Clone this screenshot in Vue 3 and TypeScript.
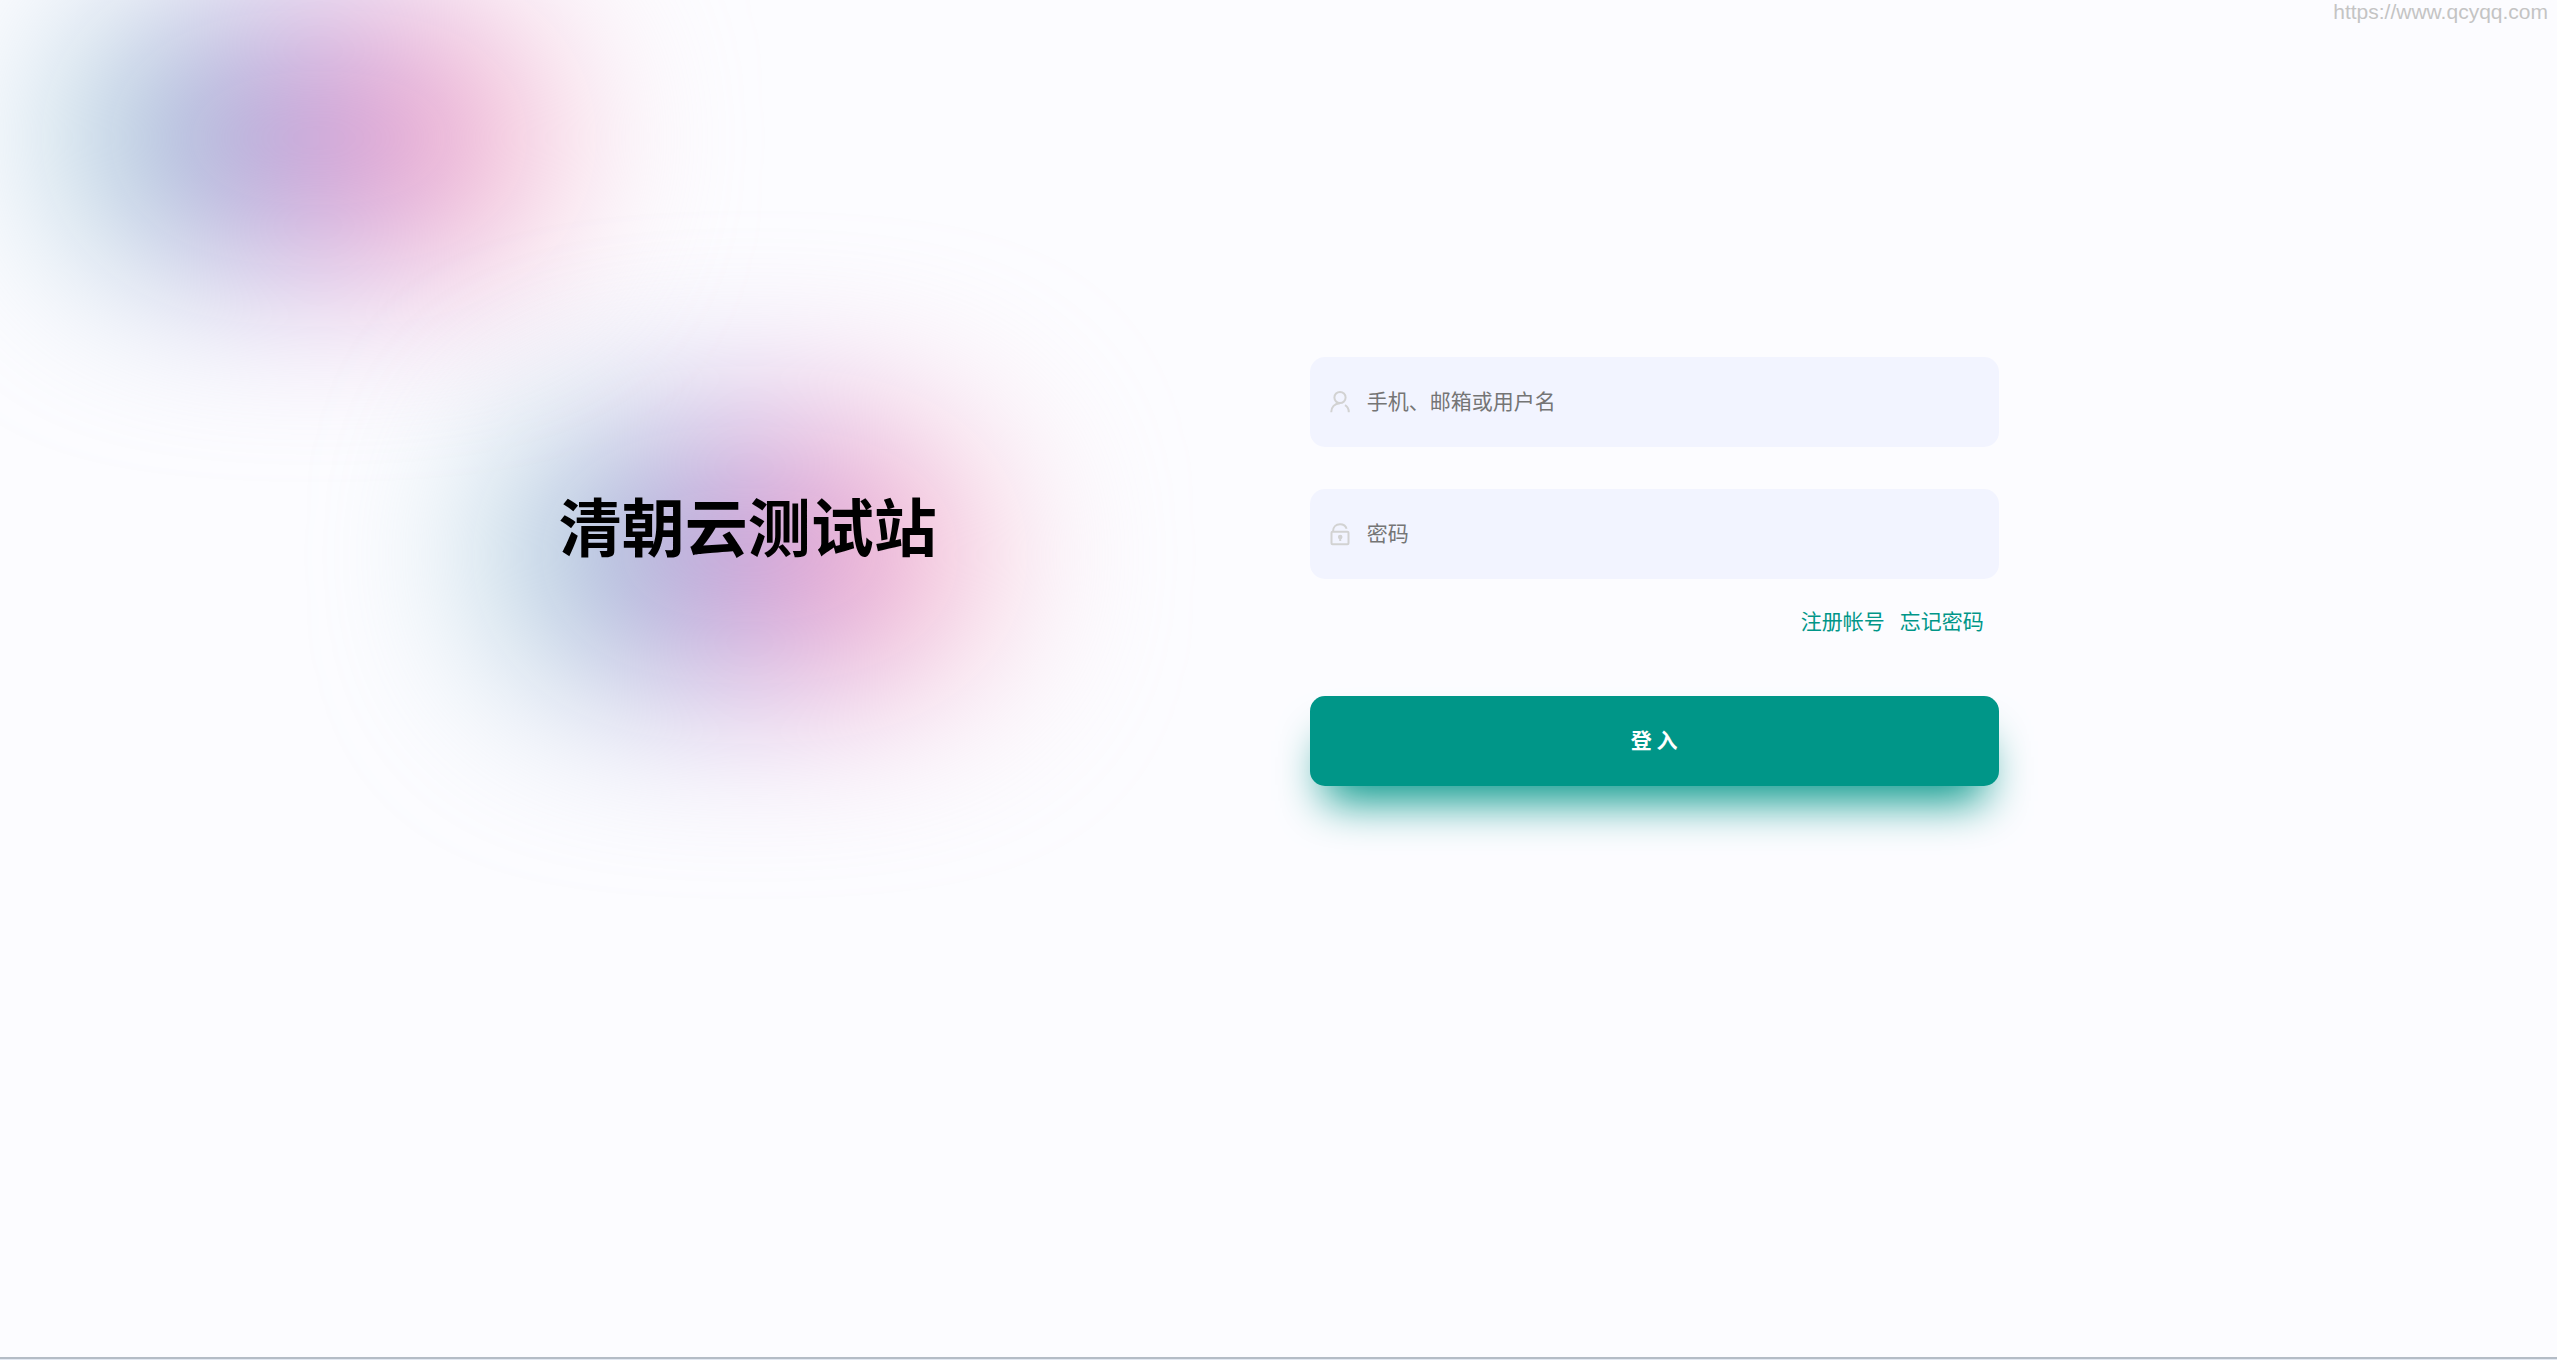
<script setup lang="ts">
import { ref } from 'vue'

const account = ref('')
const password = ref('')
</script>

<template>
  <div class="page">
    <div class="glow glow-corner" aria-hidden="true"></div>
    <header class="topbar">
      <a class="site-link" href="https://www.qcyqq.com">https://www.qcyqq.com</a>
    </header>
    <main class="login">
      <section class="brand">
        <div class="glow glow-brand" aria-hidden="true"></div>
        <h1 class="title">清朝云测试站</h1>
      </section>
      <form class="form" @submit.prevent>
        <label class="field" for="account">
          <svg class="icon" viewBox="0 0 24 24" aria-hidden="true">
            <circle cx="12" cy="7.5" r="5.6" />
            <path d="M3.2 22.2C3.2 17.2 6.6 13.4 12 13.2" />
            <path d="M17 15.2C19.4 16.6 20.8 19 20.8 22.2" />
          </svg>
          <input id="account" v-model="account" class="input" type="text" placeholder="手机、邮箱或用户名" aria-label="手机、邮箱或用户名" />
        </label>
        <label class="field" for="password">
          <svg class="icon" viewBox="0 0 24 24" aria-hidden="true">
            <rect x="3.5" y="9.8" width="17" height="12.4" rx="1" />
            <path d="M5 9.5C5 5 8 2.2 12 2.2C15.2 2.2 17.8 4 18.6 6.8" />
            <circle class="solid" cx="12.2" cy="15" r="1.3" />
            <path d="M12.2 15V19" />
          </svg>
          <input id="password" v-model="password" class="input" type="password" placeholder="密码" aria-label="密码" />
        </label>
        <nav class="links">
          <a class="link" href="#register">注册帐号</a>
          <a class="link" href="#forgot">忘记密码</a>
        </nav>
        <button class="submit" type="submit">登 入</button>
      </form>
    </main>
    <footer class="edge"></footer>
  </div>
</template>

<style>
body {
  background: #fcfcff;
}
</style>

<style scoped>
.page {
  position: relative;
  display: flex;
  flex-direction: column;
  min-height: 100vh;
  overflow: hidden;
  font-family: "Noto Sans CJK SC", sans-serif;
  font-size: 21px;
}

.topbar {
  position: relative;
  display: flex;
  justify-content: flex-end;
  padding: 0 9px;
}

.site-link {
  color: #c4c4c4;
  font-family: "Liberation Sans", Arial, sans-serif;
  font-size: 21px;
  line-height: 24px;
  text-decoration: none;
}

.login {
  flex: 1;
  display: grid;
  grid-template-columns: 1fr 1fr;
  align-items: start;
  width: 70.9%;
  margin-left: 11.52%;
  padding-top: 333px;
}

.brand {
  position: relative;
  padding-top: 121px;
  text-align: center;
}

.title {
  position: relative;
  margin: 0;
  color: #000;
  font-size: 63px;
  font-weight: 700;
  line-height: 92px;
}

.glow {
  position: absolute;
  width: 490px;
  height: 260px;
  border-radius: 130px;
  background: linear-gradient(90deg, #8ccfd0 0%, #9abad2 18%, #aaa6dc 34%, #cb98da 50%, #e694c8 68%, #f7bacd 84%, #fbd0da 100%);
  filter: blur(90px);
}

.glow-corner {
  top: 8px;
  left: 74px;
}

.glow-brand {
  top: 68px;
  left: calc(50% - 243px);
}

.form {
  position: relative;
  display: flex;
  flex-direction: column;
  justify-self: center;
  width: 76%;
}

.field {
  display: flex;
  align-items: center;
  gap: 15px;
  height: 90px;
  padding: 0 18px;
  border-radius: 15px;
  background: #f2f4ff;
}

.field + .field {
  margin-top: 42px;
}

.icon {
  flex: none;
  width: 24px;
  height: 24px;
  fill: none;
  stroke: #d2d2d2;
  stroke-width: 2;
}

.icon .solid {
  fill: #d2d2d2;
}

.input {
  box-sizing: border-box;
  flex: 1;
  min-width: 0;
  height: 90px;
  padding: 0 0 4px;
  border: 0;
  outline: 0;
  background: transparent;
  color: #333;
  font: inherit;
}

.input::placeholder {
  color: #757575;
  opacity: 1;
}

.links {
  display: flex;
  justify-content: flex-end;
  gap: 15px;
  margin: 26px 0 61px;
  padding: 0 15px;
}

.link {
  color: #009688;
  line-height: 30px;
  text-decoration: none;
}

.submit {
  height: 90px;
  padding: 0 0 4px;
  border: 0;
  border-radius: 15px;
  background: #009688;
  box-shadow: 0 30px 45px -15px #009688;
  color: #fff;
  font: inherit;
  font-weight: 700;
  cursor: pointer;
}

.edge {
  position: relative;
  height: 1px;
  border-top: 2px solid #b4bcc6;
  background: #e2e8f2;
}
</style>
